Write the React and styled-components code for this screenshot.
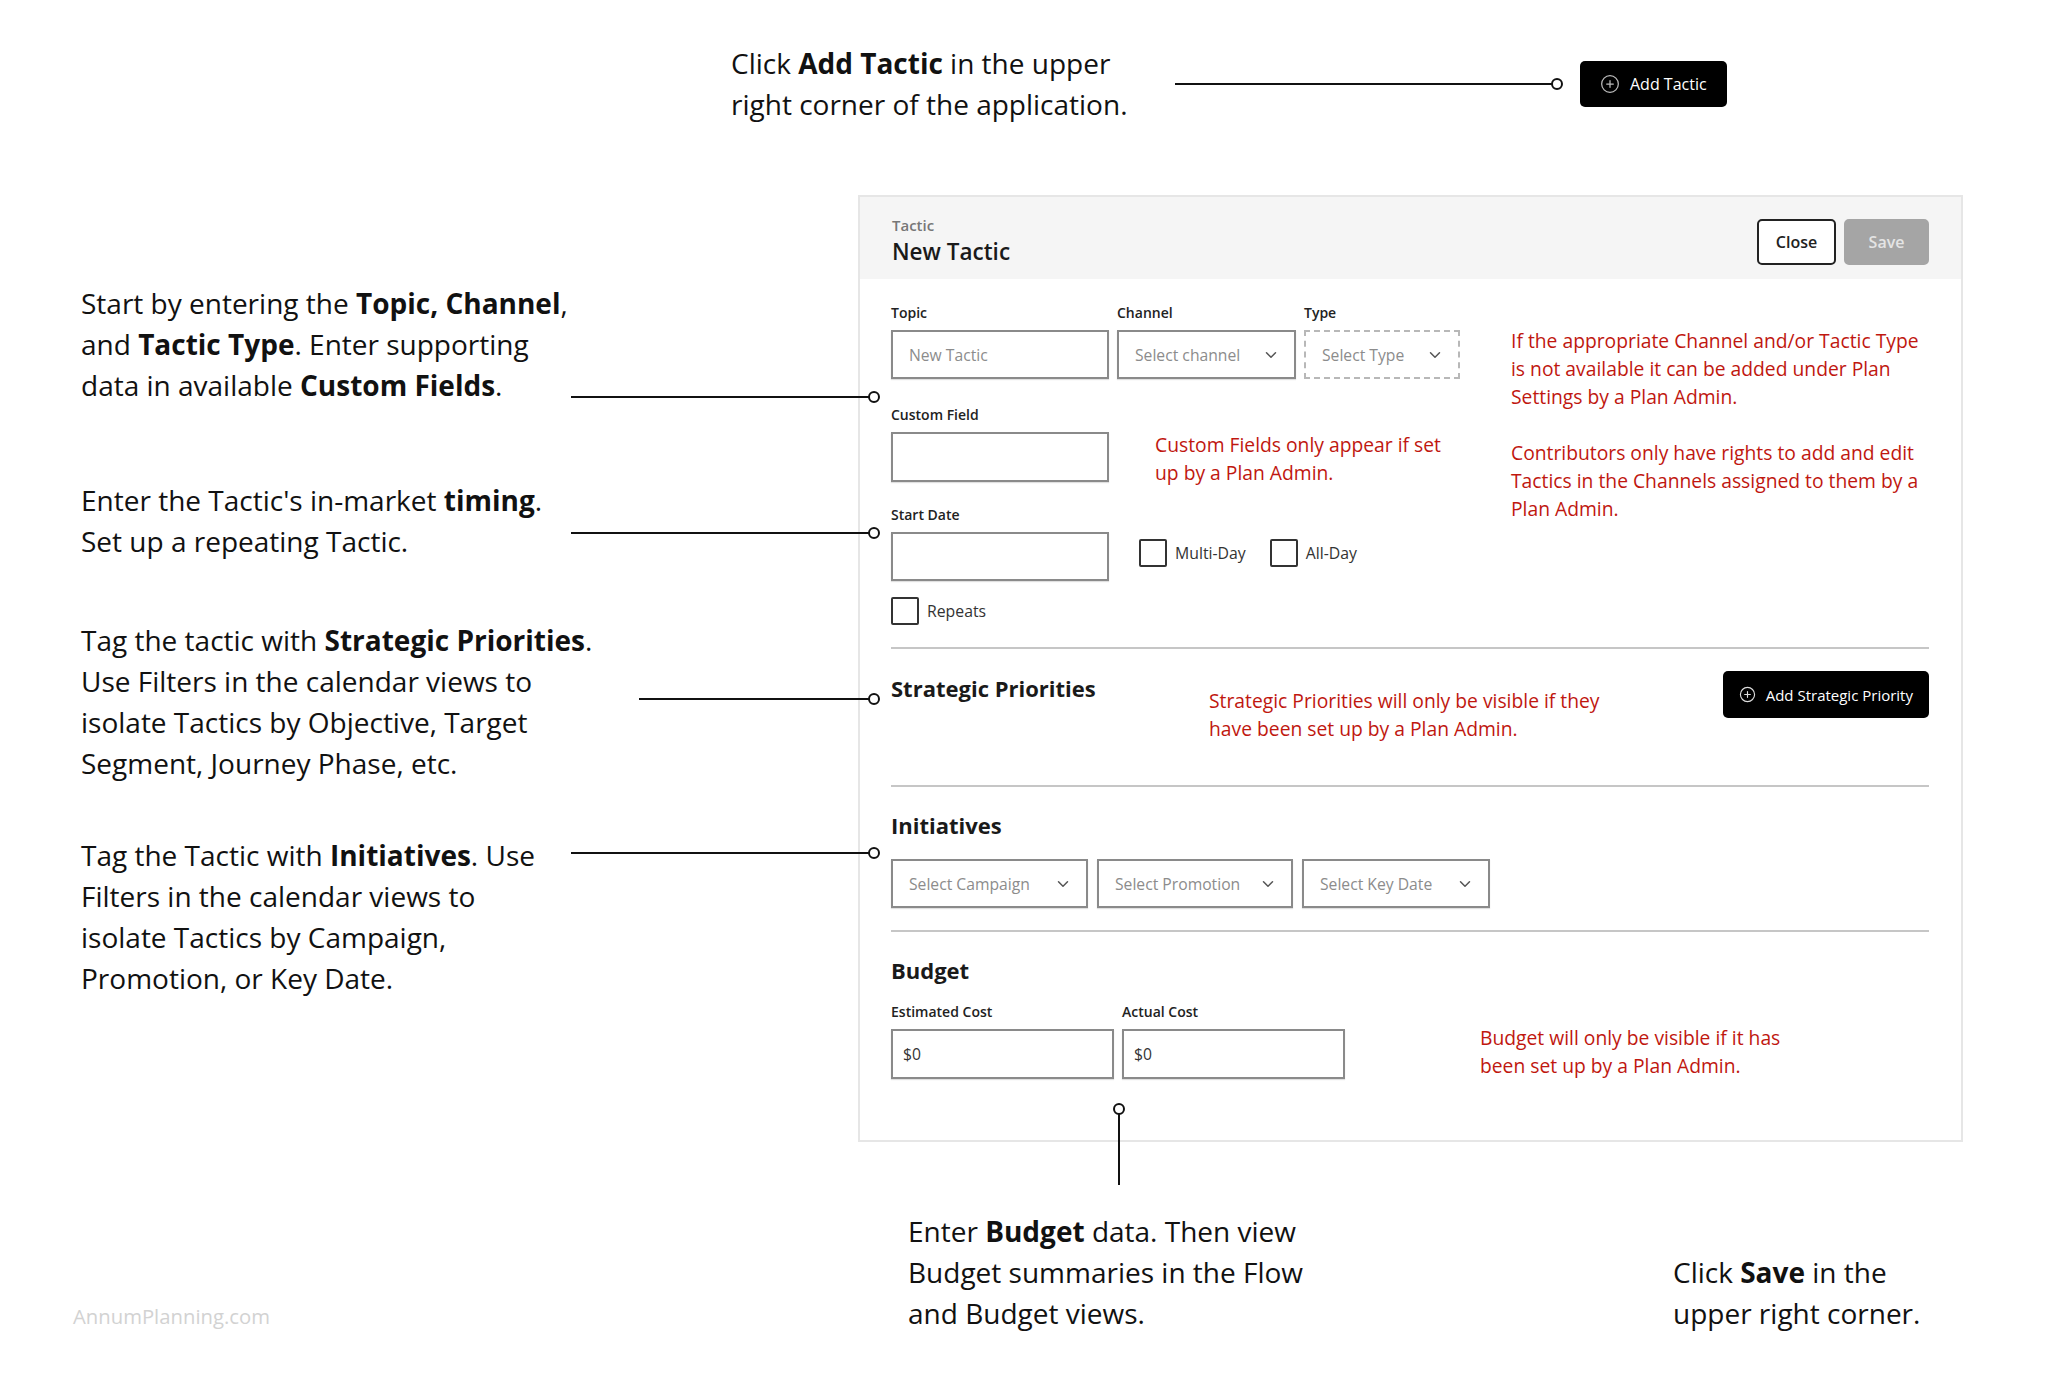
import React from 'react';
import styled, { createGlobalStyle } from 'styled-components';
import { CirclePlus, ChevronDown } from 'lucide-react';

const FONT = `"Open Sans", "Lato", sans-serif`;
const RED = '#c0170f';

const GlobalStyle = createGlobalStyle`
  body {
    margin: 0;
    background: #fff;
    font-family: ${FONT};
  }
`;

const Page = styled.div`
  position: relative;
  width: 2048px;
  height: 1383px;
  background: #fff;
  color: #111;
  overflow: hidden;
`;

const TopRow = styled.div`
  display: flex;
  align-items: center;
  height: 168px;
  padding-left: 731px;
  margin-bottom: 27px;
`;

const Guide = styled.div`
  font-size: 28px;
  line-height: 41px;
  color: #111;
  width: ${({ $w }) => ($w ? `${$w}px` : 'auto')};
  margin-top: ${({ $mt }) => $mt || 0}px;
  white-space: nowrap;
  b {
    font-weight: 700;
  }
`;

/* leader line with an open dot on its end */
const Leader = styled.div`
  position: relative;
  height: 2px;
  background: #111;
  width: ${({ $w }) => $w}px;
  flex: none;
  &::after {
    content: '';
    position: absolute;
    right: -6px;
    top: -5px;
    width: 8px;
    height: 8px;
    border: 2px solid #111;
    border-radius: 50%;
    background: #fff;
  }
`;

const Callout = styled(Leader)`
  position: absolute;
  left: ${({ $x }) => $x}px;
  top: ${({ $y }) => $y}px;
  z-index: 2;
`;

const VCallout = styled.div`
  position: absolute;
  left: ${({ $x }) => $x}px;
  top: ${({ $y }) => $y}px;
  width: 2px;
  height: ${({ $h }) => $h}px;
  background: #111;
  z-index: 2;
  &::after {
    content: '';
    position: absolute;
    left: -5px;
    top: -6px;
    width: 8px;
    height: 8px;
    border: 2px solid #111;
    border-radius: 50%;
    background: #fff;
  }
`;

const DarkButton = styled.button`
  display: flex;
  align-items: center;
  gap: 10px;
  height: ${({ $h }) => $h || 46}px;
  padding: 0 ${({ $px }) => $px || 20}px;
  margin-left: ${({ $ml }) => $ml || 0}px;
  background: #000;
  color: #fff;
  border: none;
  border-radius: 5px;
  font-family: ${FONT};
  font-size: ${({ $fs }) => $fs || 16}px;
  font-weight: 500;
  white-space: nowrap;
`;

const MainRow = styled.div`
  display: grid;
  grid-template-columns: 858px 1105px;
`;

const LeftNotes = styled.div`
  display: flex;
  flex-direction: column;
  padding-left: 81px;
`;

const Panel = styled.section`
  height: 947px;
  box-sizing: border-box;
  border: 2px solid #e6e6e6;
  display: flex;
  flex-direction: column;
`;

const PanelHeader = styled.header`
  height: 82px;
  background: #f5f5f5;
  display: flex;
  align-items: center;
  justify-content: space-between;
  padding: 0 32px;
`;

const Titles = styled.div`
  display: flex;
  flex-direction: column;
  padding-top: 5px;
`;

const Kicker = styled.div`
  font-size: 15px;
  line-height: 20px;
  color: #777;
  font-weight: 600;
`;

const Title = styled.h1`
  margin: 2px 0 0;
  font-size: 22.5px;
  line-height: 30px;
  font-weight: 600;
  color: #1a1a1a;
`;

const HeaderActions = styled.div`
  display: flex;
  gap: 8px;
  margin-top: 8px;
`;

const GhostButton = styled.button`
  width: ${({ $w }) => $w}px;
  height: 46px;
  border-radius: 5px;
  font-family: ${FONT};
  font-size: 16px;
  font-weight: 600;
  border: 2px solid ${({ $disabled }) => ($disabled ? '#a5a5a5' : '#222')};
  background: ${({ $disabled }) => ($disabled ? '#a5a5a5' : '#fff')};
  color: ${({ $disabled }) => ($disabled ? '#e4e4e4' : '#222')};
`;

const PanelBody = styled.div`
  padding: 24px 32px 0 31px;
  display: flex;
  flex-direction: column;
`;

const TopForm = styled.div`
  display: flex;
`;

const FormCol = styled.div`
  width: 620px;
  display: flex;
  flex-direction: column;
`;

const Row = styled.div`
  display: flex;
  align-items: ${({ $align }) => $align || 'flex-start'};
  gap: ${({ $gap }) => $gap || 0}px;
  margin-top: ${({ $mt }) => $mt || 0}px;
`;

const Field = styled.div`
  display: flex;
  flex-direction: column;
  gap: 7px;
  width: ${({ $w }) => $w}px;
  flex: none;
`;

const Label = styled.label`
  font-size: 14px;
  line-height: 20px;
  font-weight: 600;
  color: #222;
`;

const Box = styled.div`
  height: ${({ $h }) => $h || 49}px;
  box-sizing: border-box;
  border: 2px ${({ $dashed }) => ($dashed ? 'dashed #b8b8b8' : 'solid #8a8a8a')};
  box-shadow: ${({ $dashed }) => ($dashed ? 'none' : '0 1px 1px rgba(0,0,0,0.12)')};
  width: ${({ $w }) => ($w ? `${$w}px` : 'auto')};
  flex: none;
  display: flex;
  align-items: center;
  justify-content: space-between;
  padding: 0 ${({ $pr }) => $pr || 16}px 0 ${({ $pl }) => $pl || 16}px;
  font-size: 15.7px;
  color: ${({ $value }) => ($value ? '#333' : '#8c8c8c')};
`;

const Note = styled.p`
  margin: ${({ $mt }) => $mt || 0}px 0 0 ${({ $ml }) => $ml || 0}px;
  font-size: 19.3px;
  line-height: 28px;
  color: ${RED};
  white-space: nowrap;
`;

const NoteCol = styled.div`
  display: flex;
  flex-direction: column;
  padding-top: 24px;
  gap: 28px;
`;

const Checks = styled.div`
  display: flex;
  align-items: center;
  gap: 24px;
  margin-left: ${({ $ml }) => $ml || 0}px;
  height: 49px;
  padding-bottom: 8px;
  box-sizing: border-box;
`;

const Check = styled.span`
  display: flex;
  align-items: center;
  gap: 8px;
  font-size: 15.8px;
  font-weight: 500;
  color: #333;
  &::before {
    content: '';
    width: 28px;
    height: 28px;
    box-sizing: border-box;
    border: 2px solid #333;
    border-radius: 2px;
  }
`;

const Divider = styled.hr`
  margin: ${({ $mt }) => $mt}px 0 0;
  border: none;
  height: 2px;
  background: #c6c6c6;
`;

const SectionRow = styled.div`
  display: grid;
  grid-template-columns: 318px 1fr auto;
  align-items: start;
  margin-top: 22px;
`;

const Heading = styled.h2`
  margin: ${({ $mt }) => $mt || 0}px 0 0;
  font-size: 22px;
  line-height: 28px;
  font-weight: 700;
  color: #1a1a1a;
`;

const BottomRow = styled.div`
  display: grid;
  grid-template-columns: 835px 765px auto;
  align-items: end;
  padding: 69px 0 0 73px;
`;

const Brand = styled.div`
  font-size: 20.3px;
  line-height: 28px;
  color: #d2d2d2;
  margin-bottom: 4px;
`;

const Select = ({ children, w, dashed }) => (
  <Box $w={w} $dashed={dashed} $pl={16} $pr={14}>
    {children}
    <ChevronDown size={18} color="#555" strokeWidth={2} />
  </Box>
);

export default function App() {
  return (
    <Page>
      <GlobalStyle />

      <TopRow>
        <Guide $w={444}>
          Click <b>Add Tactic</b> in the upper
          <br />
          right corner of the application.
        </Guide>
        <Leader $w={382} />
        <DarkButton $ml={23}>
          <CirclePlus size={20} color="#bbb" strokeWidth={1.5} />
          Add Tactic
        </DarkButton>
      </TopRow>

      <MainRow>
        <LeftNotes>
          <Guide $mt={88}>
            Start by entering the <b>Topic, Channel</b>,
            <br />
            and <b>Tactic Type</b>. Enter supporting
            <br />
            data in available <b>Custom Fields</b>.
          </Guide>
          <Guide $mt={74}>
            Enter the Tactic's in-market <b>timing</b>.
            <br />
            Set up a repeating Tactic.
          </Guide>
          <Guide $mt={58}>
            Tag the tactic with <b>Strategic Priorities</b>.
            <br />
            Use Filters in the calendar views to
            <br />
            isolate Tactics by Objective, Target
            <br />
            Segment, Journey Phase, etc.
          </Guide>
          <Guide $mt={51}>
            Tag the Tactic with <b>Initiatives</b>. Use
            <br />
            Filters in the calendar views to
            <br />
            isolate Tactics by Campaign,
            <br />
            Promotion, or Key Date.
          </Guide>
        </LeftNotes>

        <Panel>
          <PanelHeader>
            <Titles>
              <Kicker>Tactic</Kicker>
              <Title>New Tactic</Title>
            </Titles>
            <HeaderActions>
              <GhostButton $w={79}>Close</GhostButton>
              <GhostButton $w={85} $disabled>Save</GhostButton>
            </HeaderActions>
          </PanelHeader>

          <PanelBody>
            <TopForm>
              <FormCol>
                <Row $gap={8}>
                  <Field $w={218}>
                    <Label>Topic</Label>
                    <Box>New Tactic</Box>
                  </Field>
                  <Field $w={179}>
                    <Label>Channel</Label>
                    <Select>Select channel</Select>
                  </Field>
                  <Field $w={156}>
                    <Label>Type</Label>
                    <Select dashed>Select Type</Select>
                  </Field>
                </Row>

                <Row $mt={26}>
                  <Field $w={218}>
                    <Label>Custom Field</Label>
                    <Box $h={50} />
                  </Field>
                  <Note $ml={46} $mt={26}>
                    Custom Fields only appear if set
                    <br />
                    up by a Plan Admin.
                  </Note>
                </Row>

                <Row $mt={18} $align="flex-end">
                  <Field $w={218}>
                    <Label>Start Date</Label>
                    <Box />
                  </Field>
                  <Checks $ml={30}>
                    <Check>Multi-Day</Check>
                    <Check>All-Day</Check>
                  </Checks>
                </Row>

                <Row $mt={16}>
                  <Check>Repeats</Check>
                </Row>
              </FormCol>

              <NoteCol>
                <Note>
                  If the appropriate Channel and/or Tactic Type
                  <br />
                  is not available it can be added under Plan
                  <br />
                  Settings by a Plan Admin.
                </Note>
                <Note>
                  Contributors only have rights to add and edit
                  <br />
                  Tactics in the Channels assigned to them by a
                  <br />
                  Plan Admin.
                </Note>
              </NoteCol>
            </TopForm>

            <Divider $mt={22} />

            <SectionRow>
              <Heading $mt={3}>Strategic Priorities</Heading>
              <Note $mt={16}>
                Strategic Priorities will only be visible if they
                <br />
                have been set up by a Plan Admin.
              </Note>
              <DarkButton $h={47} $px={16} $fs={15}>
                <CirclePlus size={17} color="#ddd" strokeWidth={1.6} />
                Add Strategic Priority
              </DarkButton>
            </SectionRow>

            <Divider $mt={42} />

            <Heading $mt={24}>Initiatives</Heading>
            <Row $mt={20} $gap={9}>
              <Select w={197}>Select Campaign</Select>
              <Select w={196}>Select Promotion</Select>
              <Select w={188}>Select Key Date</Select>
            </Row>

            <Divider $mt={22} />

            <Heading $mt={24}>Budget</Heading>
            <Row $mt={18} $gap={8}>
              <Field $w={223}>
                <Label>Estimated Cost</Label>
                <Box $h={50} $pl={10} $value>$0</Box>
              </Field>
              <Field $w={223}>
                <Label>Actual Cost</Label>
                <Box $h={50} $pl={10} $value>$0</Box>
              </Field>
              <Note $ml={127} $mt={22}>
                Budget will only be visible if it has
                <br />
                been set up by a Plan Admin.
              </Note>
            </Row>
          </PanelBody>
        </Panel>
      </MainRow>

      <BottomRow>
        <Brand>AnnumPlanning.com</Brand>
        <Guide>
          Enter <b>Budget</b> data. Then view
          <br />
          Budget summaries in the Flow
          <br />
          and Budget views.
        </Guide>
        <Guide>
          Click <b>Save</b> in the
          <br />
          upper right corner.
        </Guide>
      </BottomRow>

      <Callout $x={571} $y={396} $w={303} />
      <Callout $x={571} $y={532} $w={303} />
      <Callout $x={639} $y={698} $w={235} />
      <Callout $x={571} $y={852} $w={303} />
      <VCallout $x={1118} $y={1109} $h={76} />
    </Page>
  );
}
